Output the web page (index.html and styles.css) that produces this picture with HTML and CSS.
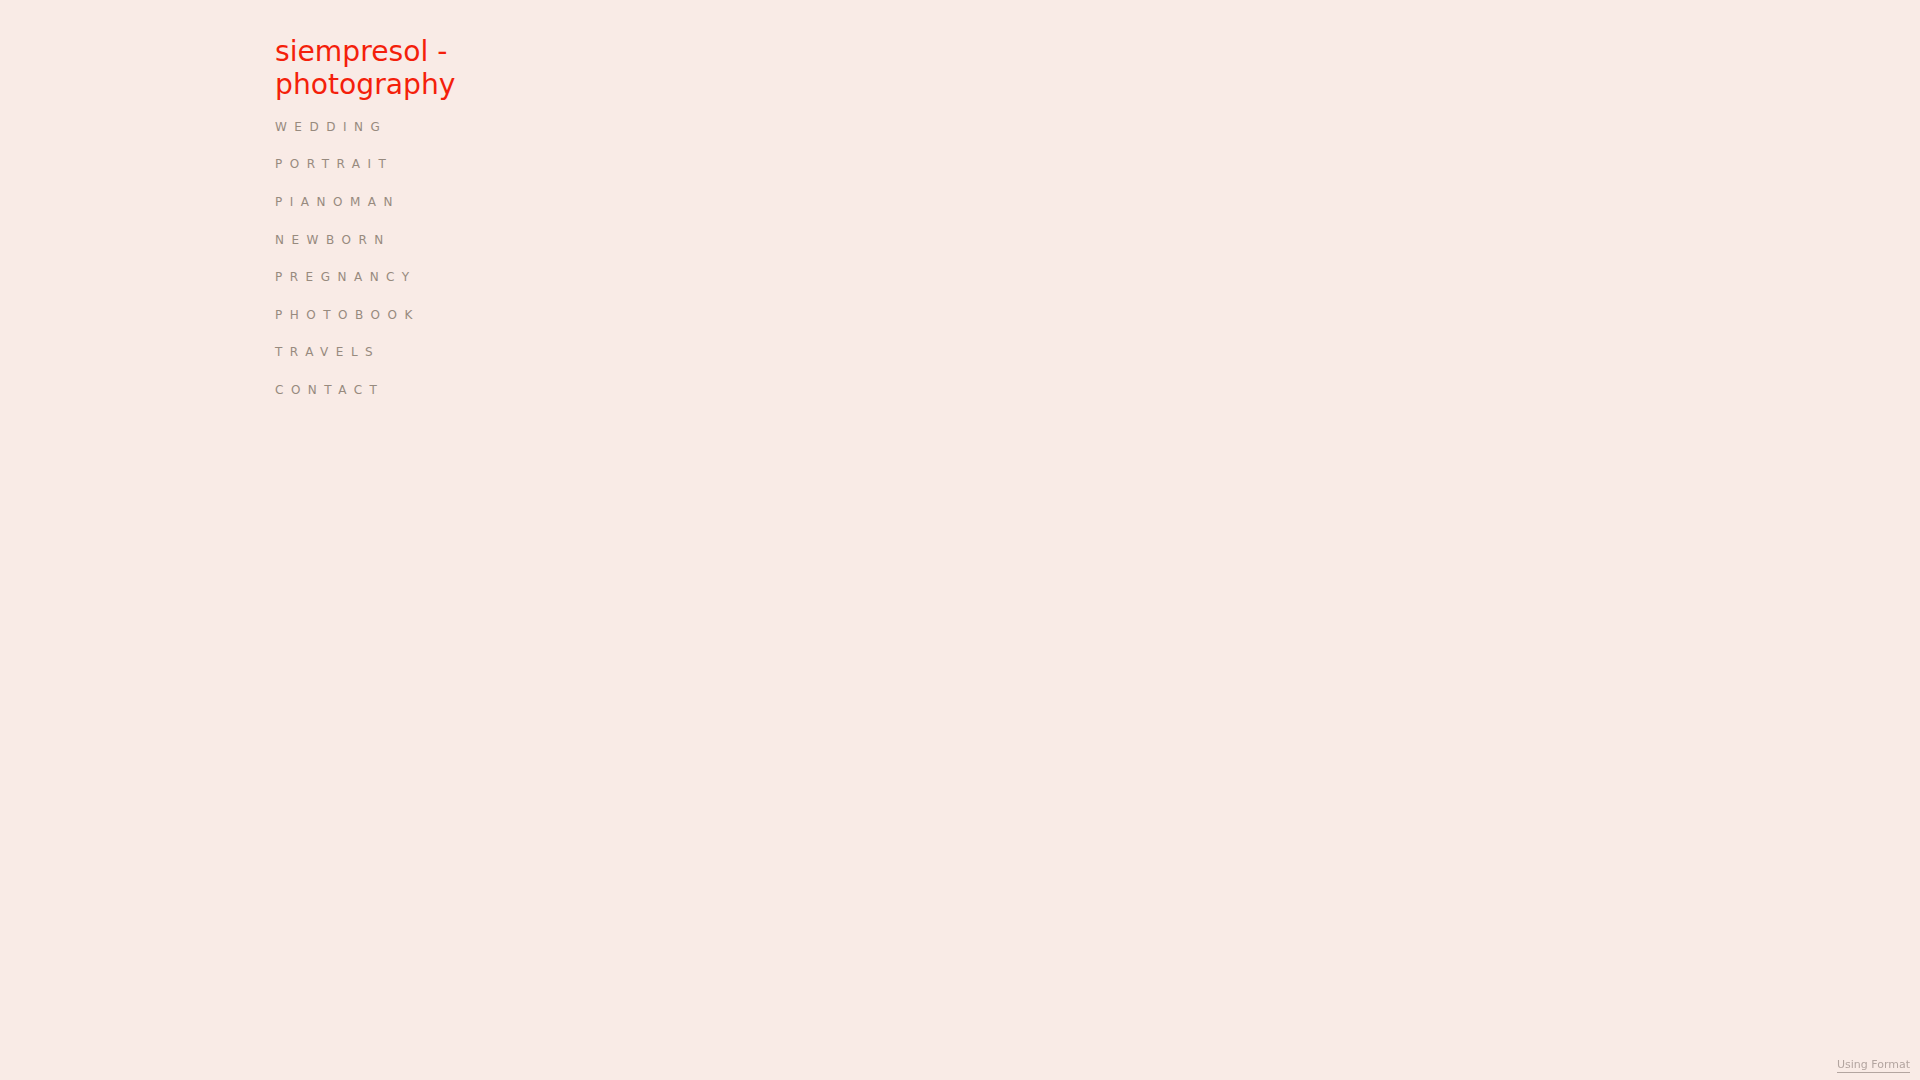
FILE: index.html
```html
<!DOCTYPE html>
<html lang="en">
<head>
<meta charset="utf-8">
<title>siempresol - photography</title>
<link rel="stylesheet" href="styles.css">
</head>
<body>
<div class="page">
  <aside class="sidebar">
    <h1 class="site-title"><a href="#">siempresol - photography</a></h1>
    <nav class="menu">
      <a class="menu-item" href="#">WEDDING</a>
      <a class="menu-item" href="#">PORTRAIT</a>
      <a class="menu-item" href="#">PIANOMAN</a>
      <a class="menu-item" href="#">NEWBORN</a>
      <a class="menu-item" href="#">PREGNANCY</a>
      <a class="menu-item" href="#">PHOTOBOOK</a>
      <a class="menu-item" href="#">TRAVELS</a>
      <a class="menu-item" href="#">CONTACT</a>
    </nav>
  </aside>
</div>
<a class="using-format" href="#">Using Format</a>
</body>
</html>
```
FILE: styles.css
```css
html, body {
  margin: 0;
  padding: 0;
  height: 100%;
}
body {
  background: #f9ebe6;
  font-family: "DejaVu Sans", sans-serif;
  overflow: hidden;
}
.page {
  padding: 34.5px 0 0 275px;
}
.sidebar {
  width: 240px;
  display: flex;
  flex-direction: column;
}
.site-title {
  margin: 0 0 7.5px 0;
  font-size: 28.2px;
  font-weight: normal;
  line-height: 33px;
}
.site-title a {
  color: #f41f0b;
  text-decoration: none;
}
.menu {
  display: flex;
  flex-direction: column;
}
.menu-item {
  display: block;
  font-size: 12px;
  line-height: 18px;
  padding: 9.8px 0;
  letter-spacing: 7.5px;
  color: #978a7e;
  text-decoration: none;
  white-space: nowrap;
}
.using-format {
  position: fixed;
  right: 10px;
  bottom: 7px;
  font-size: 11px;
  line-height: 13px;
  color: #b3a5a0;
  text-decoration: none;
  border-bottom: 1px solid #b3a5a0;
  padding-bottom: 1px;
}
```
